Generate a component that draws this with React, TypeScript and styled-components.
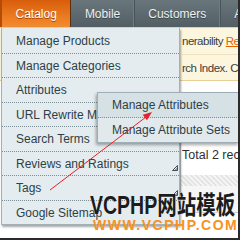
import React from "react";
import styled, { createGlobalStyle } from "styled-components";

const Global = createGlobalStyle`
  html, body {
    margin: 0;
    padding: 0;
    background: #fff;
  }
  body {
    font-family: "Liberation Sans", Arial, sans-serif;
  }
`;

const Root = styled.div`
  width: 244px;
  height: 243px;
  background: #fff;
  overflow: hidden;
`;

const Screen = styled.div`
  position: relative;
  width: 238px;
  height: 238px;
  border-right: 2px solid #2b2b2b;
  border-bottom: 2px solid #2b2b2b;
  overflow: hidden;
  display: flex;
  flex-direction: column;
  background: #fff;
`;

const NavBar = styled.nav`
  height: 28px;
  flex: none;
  display: flex;
  background: linear-gradient(#69767c, #525e64);
  box-sizing: border-box;
  border-bottom: 1px solid #c8d2d6;
`;

const Tab = styled.div<{ $active?: boolean }>`
  display: flex;
  align-items: center;
  padding: 1px 13.5px 0;
  font-size: 12px;
  white-space: nowrap;
  color: ${(p) => (p.$active ? "#fff" : "#eef1f2")};
  text-shadow: 0 1px 0 ${(p) => (p.$active ? "#a84300" : "#3b464b")};
  background: ${(p) =>
    p.$active ? "linear-gradient(#d85d0c, #ee7f24 70%, #f08c30)" : "none"};
  border-left: ${(p) => (p.$active ? "2px solid #b44c08" : "none")};
  border-right: 1px solid ${(p) => (p.$active ? "#5a3010" : "#485459")};
  box-shadow: ${(p) => (p.$active ? "none" : "inset -1px 0 0 #6f7c82")};
`;

const Page = styled.div`
  flex: 1;
  display: flex;
  flex-direction: column;
  padding-left: 182px;
  font-size: 12px;
  color: #3d3d3d;
  white-space: nowrap;
`;

const Notice = styled.div`
  margin-left: -182px;
  padding-left: 182px;
  background: #fcf6de;
  border-bottom: 1px solid #e8cf95;
  display: flex;
  flex-direction: column;
  font-size: 11.5px;
  letter-spacing: -0.5px;
`;

const NoticeRow = styled.div<{ $last?: boolean }>`
  height: 25.5px;
  line-height: 27px;
  border-bottom: ${(p) => (p.$last ? "none" : "1px solid #efe2bb")};
`;

const Link = styled.span`
  color: #eb5e00;
  text-decoration: underline;
`;

const Grid = styled.div`
  margin-top: 61px;
  margin-left: -2px;
  border-top: 1px solid #c4cbce;
  border-left: 1px solid #c4cbce;
  display: flex;
  flex-direction: column;
`;

const GridInfo = styled.div`
  height: 25px;
  line-height: 25px;
  padding-left: 1px;
  font-size: 12.5px;
  color: #2f2f2f;
`;

const Hatch = styled.div`
  margin-top: 7px;
  height: 11px;
  background: repeating-linear-gradient(
    45deg,
    #e2e2e2 0 1.5px,
    #f3f3f3 1.5px 3.5px
  );
`;

const GridBody = styled.div`
  height: 26px;
  background: #f6f6f6;
  border-bottom: 1px solid #cfcfcf;
`;

const Menu = styled.ul`
  position: absolute;
  top: 28px;
  left: 1px;
  width: 177px;
  margin: 0;
  padding: 1px 0 0;
  list-style: none;
  background: #e4ecef;
  border: 1px solid #a3b1b6;
  border-top: none;
  box-shadow: 1px 2px 2px rgba(0, 0, 0, 0.35);
`;

const Item = styled.li<{ $last?: boolean }>`
  position: relative;
  height: 23.5px;
  line-height: 24px;
  padding-left: 14px;
  font-size: 12px;
  color: #2e3f47;
  white-space: nowrap;
  overflow: hidden;
  border-bottom: ${(p) => (p.$last ? "none" : "1px dotted #7d8f96")};
`;

const ParentMark = styled.svg`
  position: absolute;
  right: 1px;
  bottom: 4px;
`;

const SubMenu = styled.ul`
  position: absolute;
  top: 92px;
  left: 97px;
  width: 141px;
  margin: 0;
  padding: 0;
  list-style: none;
  background: #e1e9ec;
  border: 1px solid #9eaeb4;
  border-right: none;
  box-shadow: -1px 2px 3px rgba(0, 0, 0, 0.35);
`;

const SubItem = styled.li<{ $hover?: boolean; $last?: boolean }>`
  height: 24px;
  line-height: 25px;
  padding-left: 14px;
  font-size: 12px;
  color: #2e3f47;
  white-space: nowrap;
  background: ${(p) => (p.$hover ? "#d5e1e5" : "transparent")};
  border-bottom: ${(p) => (p.$last ? "none" : "1px dotted #7d8f96")};
`;

const Pointer = styled.svg`
  position: absolute;
  left: 0;
  top: 0;
  pointer-events: none;
`;

const Watermark = styled.div`
  position: absolute;
  left: 90px;
  top: 190px;
  display: flex;
  flex-direction: column;
  font-family: "Liberation Sans", "Noto Sans CJK SC", sans-serif;
  font-weight: bold;
  white-space: nowrap;
  pointer-events: none;
`;

const MarkTitle = styled.div`
  font-size: 25px;
  line-height: 30px;
  color: #1c1c1c;
  transform: scaleX(0.78);
  transform-origin: left center;
  text-shadow: 0 0 1px #fff;
`;

const MarkUrl = styled.div`
  margin-left: 3px;
  margin-top: -1px;
  font-size: 14px;
  line-height: 12px;
  letter-spacing: 1.5px;
  color: #f7931e;
`;

const menuItems = [
  { label: "Manage Products" },
  { label: "Manage Categories" },
  { label: "Attributes", parent: true },
  { label: "URL Rewrite Management" },
  { label: "Search Terms" },
  { label: "Reviews and Ratings", parent: true },
  { label: "Tags", parent: true },
  { label: "Google Sitemap" },
];

function Mark() {
  return (
    <ParentMark width="6" height="6" viewBox="0 0 6 6">
      <path d="M0.5 5.5 L5.5 0.5 L5.5 5.5 Z" fill="none" stroke="#3e5058" strokeWidth="1" />
      <path d="M3 5.5 L5.5 3" stroke="#3e5058" strokeWidth="1" />
    </ParentMark>
  );
}

export default function App() {
  return (
    <Root>
      <Global />
      <Screen>
        <NavBar>
          <Tab $active>Catalog</Tab>
          <Tab>Mobile</Tab>
          <Tab>Customers</Tab>
          <Tab>Attributes</Tab>
        </NavBar>
        <Page>
          <Notice>
            <NoticeRow>
              nerability <Link>Read details</Link>
            </NoticeRow>
            <NoticeRow $last>rch Index. Click here</NoticeRow>
          </Notice>
          <Grid>
            <GridInfo>Total 2 records found</GridInfo>
            <Hatch />
            <GridBody />
          </Grid>
        </Page>

        <Menu>
          {menuItems.map((m, i) => (
            <Item key={m.label} $last={i === menuItems.length - 1}>
              {m.label}
              {m.parent && <Mark />}
            </Item>
          ))}
        </Menu>

        <SubMenu>
          <SubItem $hover>Manage Attributes</SubItem>
          <SubItem $last>Manage Attribute Sets</SubItem>
        </SubMenu>

        <Pointer width="238" height="238" viewBox="0 0 238 238">
          <line x1="50" y1="190" x2="146" y2="117" stroke="#e8202a" strokeWidth="1" />
          <polygon points="152,112 147,120.2 142.7,114.7" fill="#e8202a" />
        </Pointer>

        <Watermark>
          <MarkTitle>VCPHP网站模板</MarkTitle>
          <MarkUrl>WWW.VCPHP.COM</MarkUrl>
        </Watermark>
      </Screen>
    </Root>
  );
}
